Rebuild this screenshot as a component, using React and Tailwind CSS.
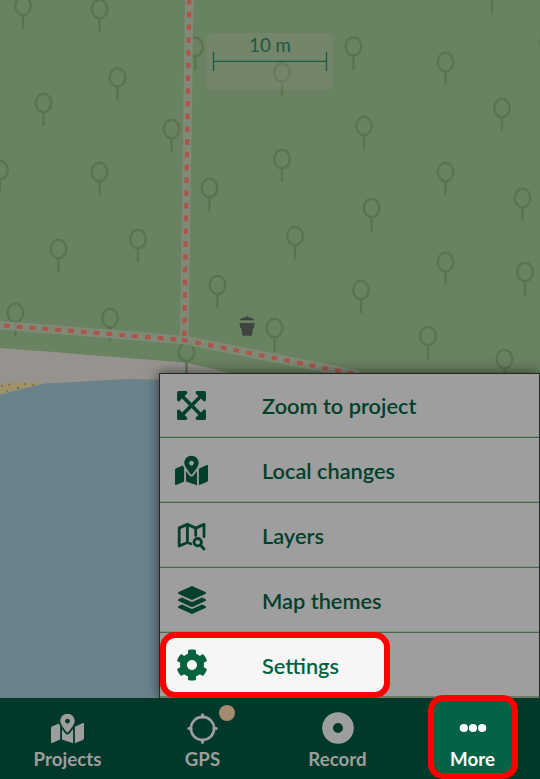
import React from 'react';
import { FaExpandArrowsAlt, FaMapMarkedAlt, FaLayerGroup, FaCog } from 'react-icons/fa';

const trees = [
  [23, 6], [99.5, 9], [117.5, 77.5], [43.5, 103], [171.5, 129], [0, 170], [99.5, 172],
  [195, 47], [209.5, 188], [353.5, 46.5], [445.5, 62], [282, 72.5], [364, 126], [502, 108],
  [282, 159], [445.5, 172], [522.5, 198], [371.5, 208], [492, -10], [548, 42], [58.5, 249],
  [138, 239], [217.5, 285], [15.3, 313], [110, 318], [186.5, 352], [274.5, 328], [295, 236],
  [361, 290], [445.5, 262], [525, 272], [428, 336], [504.5, 359],
];

function MapView() {
  return (
    <svg className="block h-[779px] w-[540px]" viewBox="0 0 540 779">
      <rect width="540" height="779" fill="#698262" />
      <path d="M0 348L25 350L55 352L88 355L115 357L153 360L185 362.5L205 367L232 374V420H0Z" fill="#96938e" />
      <path d="M0 383.5L20 382.5L45 382.5V395H0Z" fill="#a0936c" />
      <g fill="#6d6957">
        <circle cx="2" cy="386" r="1" /><circle cx="9" cy="384.5" r="1" /><circle cx="18" cy="388" r="1.2" />
        <circle cx="25" cy="384" r=".9" /><circle cx="33" cy="385" r="1" /><circle cx="7" cy="391" r=".9" />
      </g>
      <path d="M0 394.5L20 389.5L45 383.5L75 382L100 380.5L130 379L165 380V779H0Z" fill="#6a838a" />
      <g fill="none" stroke="#5a7452" strokeWidth="2.4">
        {trees.map(([x, y], i) => (
          <g key={i}>
            <ellipse cx={x} cy={y} rx="7.8" ry="9.2" />
            <path d={`M${x} ${y + 9.2}V${y + 23.3}`} />
          </g>
        ))}
      </g>
      <g fill="none" stroke="#858d7c" strokeWidth="8.6" opacity=".8">
        <path d="M189.3 0L184.2 340" />
        <path d="M-2 325L184.2 340L360 375" strokeLinejoin="round" />
      </g>
      <g fill="none" stroke="#ac554b" strokeWidth="4.2">
        <path d="M189.3 0L184.2 338" strokeDasharray="5.6 7.15" strokeDashoffset="1" />
        <path d="M0 325.2L182 339.8" strokeDasharray="5.8 7.05" strokeDashoffset="-4" />
        <path d="M182 339.8L187.5 341" />
        <path d="M195.5 342.4L360 375" strokeDasharray="5.6 7.35" />
      </g>
      <path d="M240 319.2Q243 317.5 246 317.3V316.3H248V317.3Q251 317.5 254 319.2V320.3H240Z" fill="#40443f" />
      <path d="M239.5 323H254.7L254 328H253L251.8 335.8H242.4L241.2 328H240.2Z" fill="#40443f" />
      <rect x="206.5" y="33" width="127" height="57" rx="6" fill="#909080" opacity=".27" />
      <path d="M213.5 52V71M326.5 52V71M213.5 61.3H326.5" stroke="#205943" strokeWidth="1.3" />
    </svg>
  );
}

function MapSearchIcon() {
  return (
    <svg className="size-[33px]" viewBox="0 1 33 33" fill="none" stroke="currentColor" strokeWidth="2.8" strokeLinejoin="round" strokeLinecap="round">
      <path d="M15.8 25.7L12.4 24.5L4.2 28V9.9L12.4 6.4L20.7 10.1L29 6.4V18.8M12.4 6.4V24.5M20.7 10.1V17.5" />
      <circle cx="22.7" cy="24.2" r="3.7" />
      <path d="M25.6 27.2L29 31" />
    </svg>
  );
}

function GpsIcon() {
  return (
    <svg className="size-[31px]" viewBox="0 0 31 31" fill="none" stroke="#9e9e9e" strokeLinecap="round">
      <circle cx="15.5" cy="15.5" r="11.6" strokeWidth="2.6" />
      <path d="M15.5 1.8V4M15.5 27V29.2M1.8 15.5H4M27 15.5H29.2" strokeWidth="3" />
    </svg>
  );
}

function RecordIcon() {
  return (
    <svg className="size-[32px]" viewBox="0 0 32 32">
      <circle cx="16" cy="16" r="10.4" fill="none" stroke="#9e9e9e" strokeWidth="10.8" />
    </svg>
  );
}

function MoreIcon() {
  return (
    <svg className="h-[10px] w-[28px]" viewBox="0 0 28 10" fill="#fff">
      <circle cx="4.8" cy="5" r="4.1" /><circle cx="14" cy="5" r="4.1" /><circle cx="23.2" cy="5" r="4.1" />
    </svg>
  );
}

const items = [
  { label: 'Zoom to project', icon: <FaExpandArrowsAlt className="size-[33px]" /> },
  { label: 'Local changes', icon: <FaMapMarkedAlt className="size-[33px]" /> },
  { label: 'Layers', icon: <MapSearchIcon /> },
  { label: 'Map themes', icon: <FaLayerGroup className="size-[28px]" /> },
];

function Tab({ icon, label, children }) {
  return (
    <div className="relative flex flex-col items-center pt-[13px] text-[#9e9e9e]">
      <div className="flex h-[34px] items-center justify-center">{icon}</div>
      <span className="mt-[2px] text-[18.7px] leading-[24px] font-bold">{label}</span>
      {children}
    </div>
  );
}

export default function App() {
  return (
    <div className="relative h-[779px] w-[540px] overflow-hidden font-['Lato',sans-serif]">
      <div className="absolute inset-0">
        <MapView />
      </div>
      <span className="absolute top-[33px] left-[206px] w-[128px] text-center text-[18.7px] leading-[24px] text-[#205943]">10 m</span>

      <div className="relative flex h-full flex-col justify-end">
        <nav className="ml-[159px] border-x border-t border-[#252525] bg-[#9e9e9e] text-[#03402b] shadow-[0_0_12px_rgba(0,0,0,0.6)]">
          {items.map(({ label, icon }) => (
            <div key={label} className="flex h-[65px] items-center border-b border-[#456a50] shadow-[inset_0_-1px_0_#80967f] first:h-[64px]">
              <div className="flex w-[63px] justify-center">{icon}</div>
              <span className="ml-[39px] pt-px text-[21.75px] leading-[28px] font-semibold">{label}</span>
            </div>
          ))}
          <div className="relative flex h-[65px] items-center border-b-2 border-[#687d64] text-[#04623f]">
            <div className="absolute top-[-1px] left-0 h-[66px] w-[230px] rounded-[15px] border-[6px] border-[#ff0000] bg-[#f6f6f6]" />
            <div className="relative flex w-[63px] justify-center">
              <FaCog className="size-[32px]" />
            </div>
            <span className="relative ml-[39px] pt-[2px] text-[21.75px] leading-[28px] font-semibold">Settings</span>
          </div>
        </nav>

        <footer className="relative grid h-[81px] grid-cols-4 bg-[#00392a]">
          <Tab label="Projects" icon={<FaMapMarkedAlt className="size-[33px]" />} />
          <Tab label="GPS" icon={<GpsIcon />}>
            <span className="absolute top-[7px] left-[84px] size-[16px] rounded-full bg-[#a58a70]" />
          </Tab>
          <Tab label="Record" icon={<RecordIcon />} />
          <div className="relative flex flex-col items-center pt-[13px] text-white">
            <div className="absolute top-[-3px] left-[23px] h-[84px] w-[90px] rounded-[15px] border-[6px] border-[#ff0000] bg-[#046246]" />
            <div className="relative flex h-[34px] items-center">
              <MoreIcon />
            </div>
            <span className="relative mt-[2px] text-[18.7px] leading-[24px] font-bold">More</span>
          </div>
        </footer>
      </div>
    </div>
  );
}
